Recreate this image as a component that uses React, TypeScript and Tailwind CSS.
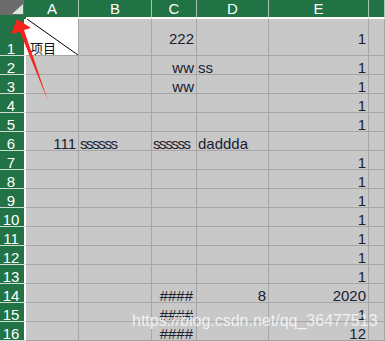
type Cell = { t: string; a?: "l" | "r" | "c"; n?: boolean } | null

const colW = ["w-[53px]", "w-[73px]", "w-[45px]", "w-[72px]", "w-[100px]", "flex-1"]
const letters = ["A", "B", "C", "D", "E", ""]

const R = (t: string): Cell => ({ t, a: "r" })
const L = (t: string): Cell => ({ t, a: "l" })
const N = (t: string): Cell => ({ t, a: "l", n: true })
const C = (t: string): Cell => ({ t, a: "c" })
const one = [null, null, null, null, R("1"), null]

const rows: Cell[][] = [
  [null, null, R("222"), null, R("1"), null],
  [null, null, R("ww"), L("ss"), R("1"), null],
  [null, null, R("ww"), null, R("1"), null],
  one,
  one,
  [R("111"), N("ssssss"), N("ssssss"), L("daddda"), null, null],
  one,
  one,
  one,
  one,
  one,
  one,
  one,
  [null, null, C("####"), R("8"), R("2020"), null],
  [null, null, C("####"), null, R("1"), null],
  [null, null, C("####"), null, R("12"), null],
]

const font = { fontFamily: '"Liberation Sans", Arial, sans-serif' }

function GridCell({ cell, w, first }: { cell: Cell; w: string; first: boolean }) {
  const align =
    cell?.a === "r" ? "justify-end pr-[2px]" : cell?.a === "c" ? "justify-end pr-[3px]" : "justify-start pl-[1px]"
  return (
    <div
      className={`${w} flex ${align} items-end border-r border-b border-[#a6a6a6] bg-[#c8c8c8] text-[15px] leading-[13px] text-[#1a2030] whitespace-nowrap overflow-visible ${first ? "pb-[10px]" : ""} ${cell?.n ? "tracking-[-1.4px]" : ""}`}
    >
      {cell?.t}
    </div>
  )
}

function HeaderCell() {
  return (
    <div className="relative w-[53px] border-r border-b border-[#a6a6a6] bg-white">
      <svg className="absolute inset-0 h-full w-full" viewBox="0 0 52 36" preserveAspectRatio="none">
        <line x1="1" y1="0" x2="52" y2="36" stroke="#000" strokeWidth="1" />
      </svg>
      <span
        className="absolute left-[4px] bottom-[1px] text-[13px] leading-none text-[#111]"
        style={{ fontFamily: '"Noto Sans CJK SC", sans-serif' }}
      >
        项目
      </span>
    </div>
  )
}

export default function App() {
  return (
    <div className="relative w-[385px] h-[341px] overflow-hidden bg-[#c8c8c8]" style={font}>
      {/* column header */}
      <div className="flex h-[19px]">
        <div className="w-[26px] bg-[#217346]">
          <div className="relative w-[24px] h-[15px] bg-[#6b6b6b]">
            <svg className="absolute inset-0" width="24" height="15" viewBox="0 0 24 15">
              <polygon points="12,14 23,14 23,4" fill="#d9e8dd" />
            </svg>
          </div>
        </div>
        {letters.map((l, i) => (
          <div
            key={i}
            className={`${colW[i]} flex items-center justify-center bg-[#217346] border-r border-[#a8c4b2] border-b-2 border-b-white text-[15px] leading-none text-white`}
          >
            {l}
          </div>
        ))}
      </div>

      {rows.map((r, ri) => (
        <div key={ri} className={`flex ${ri === 0 ? "h-[37px]" : "h-[19px]"}`}>
          <div className="w-[26px] flex items-end justify-center pr-[2px] bg-[#217346] border-r-2 border-r-white border-b border-b-[#cfdcd3] text-[15px] leading-[13px] text-white">
            {ri + 1}
          </div>
          {r.map((c, ci) =>
            ri === 0 && ci === 0 ? (
              <HeaderCell key={ci} />
            ) : (
              <GridCell key={ci} cell={c} w={colW[ci]} first={ri === 0} />
            )
          )}
        </div>
      ))}

      {/* annotation arrow */}
      <svg className="absolute left-0 top-0 pointer-events-none" width="60" height="110" viewBox="0 0 60 110">
        <polygon points="17,19 31,28 24,30 48,101 20,32 11,34" fill="#f2261c" />
      </svg>

      {/* watermark */}
      <div className="absolute left-[132px] top-[313px] text-[16px] leading-none text-white/75 whitespace-nowrap pointer-events-none">
        https://blog.csdn.net/qq_36477513
      </div>
    </div>
  )
}
